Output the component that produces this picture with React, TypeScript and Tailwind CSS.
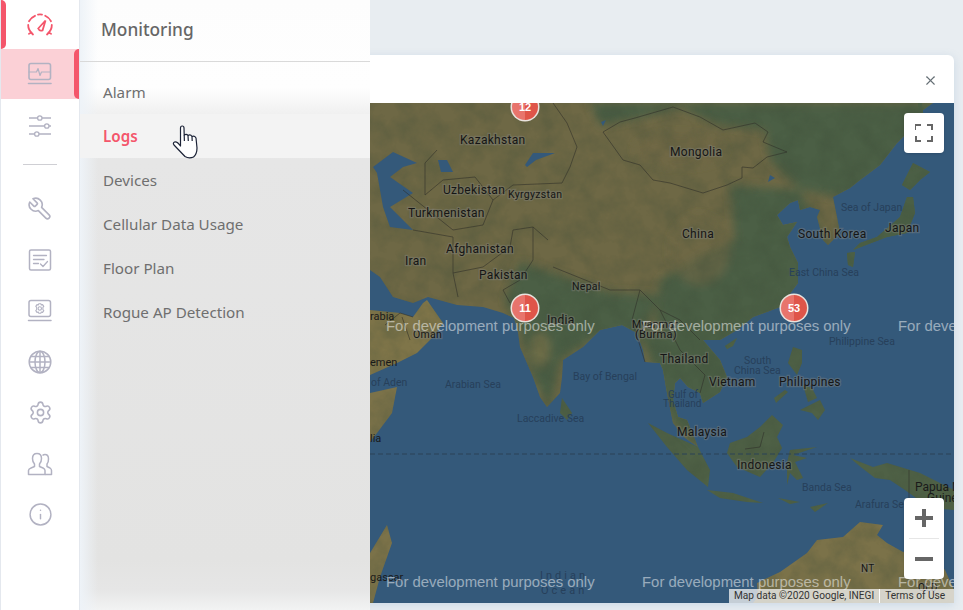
import { Info, Settings, X } from 'lucide-react';
import type { ReactNode } from 'react';

const menuItems = ['Alarm', 'Logs', 'Devices', 'Cellular Data Usage', 'Floor Plan', 'Rogue AP Detection'];

// map drawing, all points are in page pixels (viewBox starts at the map corner)
const asia =
  'M370 103 L933 103 L923 110 L910 130 L897 143 L880 165 L860 180 L850 188 L833 197 L837 217 L840 233 L828 245 L823 240 L817 217 L820 210 L810 207 L800 210 L798 200 L790 203 L777 215 L783 225 L797 222 L787 237 L790 247 L798 263 L798 283 L780 307 L753 317 L737 330 L720 340 L703 340 L720 360 L727 377 L720 392 L703 403 L700 393 L688 387 L680 378 L675 383 L673 400 L678 417 L687 420 L698 447 L685 438 L673 423 L667 393 L663 370 L660 363 L645 362 L643 350 L637 333 L622 325 L600 330 L583 347 L563 360 L562 377 L560 393 L547 407 L540 397 L533 377 L520 347 L518 332 L514 318 L503 313 L483 307 L457 305 L428 297 L413 303 L393 297 L380 277 L370 270 Z';
const arabia =
  'M370 310 L400 313 L413 317 L423 303 L427 300 L443 323 L433 337 L417 353 L397 363 L370 375 Z';
const islands = [
  'M370 393 L397 387 L392 413 L377 433 L370 442 Z',
  'M387 525 L392 543 L380 577 L373 603 L370 603 L370 553 Z',
  'M648 423 L667 433 L698 447 L710 470 L708 487 L687 470 L667 447 Z',
  'M707 490 L733 493 L763 503 L747 502 L720 498 Z',
  'M772 415 L783 425 L777 437 L782 448 L773 463 L760 477 L737 467 L727 453 L730 443 L747 437 L760 427 Z',
  'M817 447 L790 450 L787 463 L787 485 L790 473 L797 480 L803 478 L795 462 L807 458 L793 455 Z',
  'M850 458 L873 467 L887 463 L920 473 L954 490 L954 510 L930 508 L905 490 L890 480 L875 478 L862 468 Z',
  'M793 347 L802 350 L802 363 L797 375 L788 363 Z',
  'M800 410 L820 400 L825 410 L818 420 L812 413 Z',
  'M803 385 L812 388 L817 398 L808 402 Z',
  'M774 398 L785 390 L788 392 L776 403 Z',
  'M562 398 L572 413 L567 420 L560 413 Z',
  'M725 346 L737 338 L733 346 L727 349 Z',
  'M913 197 L915 213 L907 233 L887 237 L853 250 L860 243 L877 237 L900 217 L907 197 Z',
  'M847 253 L855 252 L853 267 L848 265 Z',
  'M913 163 L930 172 L920 180 L910 190 L902 185 Z',
  'M918 103 L922 103 L925 130 L922 140 L919 125 Z',
  'M778 498 L800 502 L790 504 Z',
  'M810 507 L828 503 L815 512 Z',
  'M860 522 L883 525 L877 535 L887 543 L903 552 L925 545 L945 570 L954 590 L954 603 L753 603 L758 597 L757 583 L780 572 L807 553 L817 540 L843 537 Z',
];
const greenAreas = [
  'M590 103 L940 103 L900 170 L855 200 L800 190 L770 160 L765 130 L720 125 L680 108 L640 118 L600 125 Z',
  'M730 185 L800 190 L830 250 L800 300 L740 340 L690 350 L655 325 L660 280 L700 255 L735 240 Z',
  'M520 262 L610 292 L660 295 L640 340 L640 360 L600 335 L560 360 L550 410 L530 370 L520 330 L505 300 Z',
  'M640 330 L730 340 L730 400 L700 450 L670 420 Z',
  'M840 190 L950 150 L950 270 L840 270 Z',
];
const borders = [
  'M620 122 L635 118 L673 107 L700 117 L723 130 L755 123 L768 132 L763 142 L787 152 L767 157 L753 168 L742 167 L742 178 L727 185 L703 193 L670 183 L653 180 L640 165 L623 160 L603 132 L620 122',
  'M553 103 L567 123 L577 147 L570 167 L562 183 L513 185 L493 200 L475 177 L443 180 L425 195 L425 163 L437 150',
  'M403 190 L453 230 L483 225 L493 200',
  'M413 230 L453 237 L453 273 L458 297',
  'M453 273 L483 267 L510 247 L513 230 L533 227 L548 240',
  'M533 227 L533 260 L520 280 L503 290 L510 303',
  'M553 267 L610 290 L640 290 L660 310 L680 320 L700 340',
  'M640 290 L632 320 L645 362 M660 310 L680 350 L705 375 L700 393',
  'M385 325 L400 313 L413 317 M402 317 L410 340',
  'M745 449 L760 447 L764 432',
  'M909 470 L909 500',
];
const countryLabels: [string, number, number, number][] = [
  ['Kazakhstan', 460, 144, 12],
  ['Mongolia', 670, 156, 12],
  ['Uzbekistan', 443, 194, 12],
  ['Kyrgyzstan', 508, 198, 10.5],
  ['Turkmenistan', 408, 217, 12],
  ['Afghanistan', 446, 253, 12],
  ['Iran', 405, 265, 12],
  ['Pakistan', 479, 279, 12],
  ['Nepal', 572, 290, 10.5],
  ['India', 547, 324, 12],
  ['China', 682, 238, 12],
  ['South Korea', 798, 238, 12],
  ['Japan', 885, 232, 12],
  ['Thailand', 660, 363, 12],
  ['Vietnam', 709, 386, 12],
  ['Philippines', 779, 386, 12],
  ['Malaysia', 677, 436, 12],
  ['Indonesia', 737, 469, 12],
  ['Oman', 413, 338, 10.5],
  ['Myanmar', 632, 328, 10.5],
  ['(Burma)', 635, 338, 11],
  ['NT', 861, 572, 10],
  ['QLD', 918, 591, 10],
];
const seaLabels: [string, number, number, number][] = [
  ['Sea of Japan', 841, 211, 10.5],
  ['East China Sea', 789, 276, 10.5],
  ['Philippine Sea', 829, 345, 10.5],
  ['South', 744, 364, 10.5],
  ['China Sea', 734, 374, 10.5],
  ['Gulf of', 668, 398, 10],
  ['Thailand', 663, 407, 10],
  ['Bay of Bengal', 573, 380, 10.5],
  ['Arabian Sea', 445, 388, 10.5],
  ['Laccadive Sea', 517, 422, 10.5],
  ['Banda Sea', 802, 491, 10.5],
  ['Arafura Sea', 855, 508, 10.5],
  ['of Aden', 371, 386, 10.5],
];

function Gauge() {
  return (
    <svg width="28" height="24" viewBox="0 0 28 24" fill="none" stroke="#f4566b" strokeWidth="1.8" strokeLinecap="round">
      <path d="M7 21.5 Q2 17 2.2 12" />
      <path d="M3 8.2 Q5 4.5 9 2.8" />
      <path d="M12 1.6 Q14 1.3 16 1.6" />
      <path d="M19.2 2.8 Q23 4.5 25 8.2" />
      <path d="M25.8 12 Q26 17 21 21.5" />
      <path d="M3 20.8 L5.5 19.5 M25 20.8 L22.5 19.5" />
      <path d="M12.2 15.5 L19.5 7.5 L16.6 17.3 Q13.5 18.5 12.2 15.5 Z" />
    </svg>
  );
}

function Pulse() {
  return (
    <svg width="26" height="24" viewBox="0 0 26 24" fill="none" stroke="#b2b2c2" strokeWidth="1.6" strokeLinecap="round" strokeLinejoin="round">
      <rect x="2" y="1.5" width="21.5" height="16" rx="2" />
      <path d="M2 10 H9.5 L11 6.5 L13 13.5 L14.5 10 H23.5" strokeWidth="1.2" />
      <path d="M1.5 21.5 H24" />
    </svg>
  );
}

function Sliders() {
  return (
    <svg width="24" height="24" viewBox="0 0 24 24" fill="none" stroke="#b2b2c2" strokeWidth="1.3">
      <path d="M1 5 H9.5 M14 5 H23 M1 13 H16.5 M21 13 H23 M1 21 H6.5 M11 21 H23" />
      <circle cx="11.8" cy="5" r="2.2" />
      <circle cx="18.8" cy="13" r="2.2" />
      <circle cx="8.8" cy="21" r="2.2" />
    </svg>
  );
}

function Wrench() {
  return (
    <svg width="26" height="26" viewBox="0 0 24 24" fill="none" stroke="#b2b2c2" strokeWidth="1.5" strokeLinecap="round" strokeLinejoin="round" className="-scale-x-100">
      <path d="M14.7 6.3a1 1 0 0 0 0 1.4l1.6 1.6a1 1 0 0 0 1.4 0l3.77-3.77a6 6 0 0 1-7.94 7.94l-6.91 6.91a2.12 2.12 0 0 1-3-3l6.91-6.91a6 6 0 0 1 7.94-7.94l-3.76 3.76z" />
    </svg>
  );
}

function CheckDoc() {
  return (
    <svg width="24" height="24" viewBox="0 0 24 24" fill="none" stroke="#b2b2c2" strokeWidth="1.5" strokeLinecap="round" strokeLinejoin="round">
      <rect x="1.5" y="2" width="21" height="20" rx="1.5" />
      <path d="M5.5 7.5 H18.5 M5.5 11.5 H16 M5.5 15.5 H10.5" strokeWidth="1.3" />
      <path d="M12.5 16 L15 18.5 L19.5 13.5" strokeWidth="1.3" />
    </svg>
  );
}

function LaptopGear() {
  return (
    <svg width="26" height="24" viewBox="0 0 26 24" fill="none" stroke="#b2b2c2" strokeWidth="1.5" strokeLinecap="round" strokeLinejoin="round">
      <rect x="2" y="1.5" width="21.5" height="16" rx="2" />
      <path d="M1.5 21.5 H24" />
      <circle cx="12.8" cy="9.5" r="1.7" strokeWidth="1.1" />
      <path
        d="M11.7 4.8 H13.9 L14.3 6 L15.6 5.6 L16.8 7.4 L15.9 8.4 L15.9 10.6 L16.8 11.6 L15.6 13.4 L14.3 13 L13.9 14.2 H11.7 L11.3 13 L10 13.4 L8.8 11.6 L9.7 10.6 L9.7 8.4 L8.8 7.4 L10 5.6 L11.3 6 Z"
        strokeWidth="1.1"
      />
    </svg>
  );
}

function Globe() {
  return (
    <svg width="24" height="24" viewBox="0 0 24 24" fill="none" stroke="#b2b2c2" strokeWidth="1.5">
      <circle cx="12" cy="12" r="10.8" />
      <ellipse cx="12" cy="12" rx="5" ry="10.8" />
      <path d="M12 1.2 V22.8 M1.2 12 H22.8 M2.8 6.5 H21.2 M2.8 17.5 H21.2" />
    </svg>
  );
}

function People() {
  return (
    <svg width="26" height="24" viewBox="0 0 26 24" fill="none" stroke="#b2b2c2" strokeWidth="1.5" strokeLinejoin="round">
      <path d="M1.5 22.5 V18.5 Q1.5 17 4 16 L7.5 14.5 V12 Q5.5 10 5.5 6.5 Q5.5 1.5 10 1.5 Q14.5 1.5 14.5 6.5 Q14.5 10 12.5 12 V14.5 L16 16 Q18 17 18 18.5 V22.5 Z" />
      <path d="M15.5 3.5 Q16.5 2.5 18 2.5 Q21.5 2.5 21.5 7 Q21.5 10.5 20 12 V14.5 L23 16 Q24.5 17 24.5 18.5 V22.5 H18" />
    </svg>
  );
}

function NavIcon({ children }: { children: ReactNode }) {
  return <div className="flex h-[51px] items-center justify-center">{children}</div>;
}

function HandCursor() {
  return (
    <svg width="28" height="36" viewBox="171 124 28 36" className="absolute left-[91px] top-[124px]" fill="#fff" stroke="#1b2236" strokeWidth="1.2" strokeLinejoin="round">
      <path d="M180.5 146 L180.5 128 Q180.5 126 182.2 126 Q184 126 184 128 L184.2 135 Q186.5 133.5 188 135.5 Q190.5 134 192 136.5 Q194.5 135.5 196 138 L197 148 Q197 154 193.5 157 Q189 159 185 156.5 L174 145 Q172.5 143 174.5 142 Q177 141 180.5 146 Z" />
      <path d="M184.2 135 L184.4 141 M188 135.5 L188.3 141 M192 136.5 L192.2 141" fill="none" />
    </svg>
  );
}

function MapArt() {
  const pin = (x: number, y: number, label: string) => (
    <g key={label}>
      <circle cx={x} cy={y} r="14.5" fill="#e9e3de" />
      <path d={`M${x} ${y - 13} A13 13 0 0 0 ${x} ${y + 13} Z`} fill="#e8746c" />
      <path d={`M${x} ${y - 13} A13 13 0 0 1 ${x} ${y + 13} Z`} fill="#df5549" />
      <text x={x} y={y + 4} textAnchor="middle" fontSize="11" fontWeight="700" fill="#fff" fontFamily="Liberation Sans, sans-serif">
        {label}
      </text>
    </g>
  );
  return (
    <svg width="584" height="500" viewBox="370 103 584 500" className="block">
      <defs>
        <clipPath id="mainland">
          <path d={asia} />
          <path d={arabia} />
          {islands.map((d) => (
            <path key={d} d={d} />
          ))}
        </clipPath>
        <filter id="soft" x="-10%" y="-10%" width="120%" height="120%">
          <feGaussianBlur stdDeviation="4" />
        </filter>
        <filter id="terrain" x="0" y="0" width="100%" height="100%" colorInterpolationFilters="sRGB">
          <feTurbulence type="fractalNoise" baseFrequency="0.05" numOctaves="4" seed="7" />
          <feColorMatrix values="0 0 0 0 0.24  0 0 0 0 0.3  0 0 0 0 0.22  2 0 0 0 -0.7" />
        </filter>
      </defs>
      <rect x="370" y="103" width="584" height="500" fill="#34597a" />
      <path d={asia} fill="#6e6845" />
      <path d={arabia} fill="#7f7549" />
      {islands.map((d, i) => (
        <path key={d} d={d} fill={i < 2 || i === 19 ? '#7b7249' : '#4f6146'} />
      ))}
      <g clipPath="url(#mainland)">
        <g filter="url(#soft)">
          {greenAreas.map((d) => (
            <path key={d} d={d} fill="#4c5f45" />
          ))}
          <ellipse cx="700" cy="250" rx="30" ry="35" fill="#6e6845" opacity="0.6" />
          <ellipse cx="540" cy="350" rx="10" ry="18" fill="#7b7249" opacity="0.7" />
          <ellipse cx="680" cy="150" rx="45" ry="16" fill="#6f6845" />
        </g>
        <rect x="370" y="103" width="584" height="500" filter="url(#terrain)" opacity="0.28" />
      </g>
      {/* inland water */}
      <path d="M393 152 L417 163 L403 167 L390 177 L413 193 L390 207 L413 230 L390 227 L383 207 L377 173 L373 167 Z" fill="#34597a" />
      <path d="M525 165 L533 153 L555 153 L536 160 L527 167 Z" fill="#34597a" />
      <path d="M438 160 L447 160 L453 172 L441 172 Z" fill="#34597a" />
      <path d="M601 122 L606 120 L603 126 Z" fill="#34597a" />
      <path d="M770 175 L775 178 L768 182 Z" fill="#34597a" />
      <g fill="none" stroke="#2e2e28" strokeWidth="0.7" opacity="0.8">
        {borders.map((d) => (
          <path key={d} d={d} />
        ))}
      </g>
      <path d="M370 454 H954" stroke="#2a4257" strokeWidth="1" strokeDasharray="5 3" />
      {seaLabels.map(([t, x, y, s]) => (
        <text key={t + x} x={x} y={y} fontSize={s} fill="#27405a" fontFamily="Roboto, sans-serif">
          {t}
        </text>
      ))}
      {countryLabels.map(([t, x, y, s]) => (
        <text key={t} x={x} y={y} fontSize={s} fill="#161616" stroke="#85858066" strokeWidth="2.5" paintOrder="stroke" fontFamily="Roboto, sans-serif" letterSpacing="0.3">
          {t}
        </text>
      ))}
      <text x="370" y="320" fontSize="11" fill="#1a1a1a" fontFamily="Roboto, sans-serif">rabia</text>
      <text x="370" y="366" fontSize="11" fill="#1a1a1a" fontFamily="Roboto, sans-serif">emen</text>
      <text x="370" y="442" fontSize="11" fill="#1a1a1a" fontFamily="Roboto, sans-serif">lia</text>
      <text x="370" y="581" fontSize="11" fill="#1a1a1a" fontFamily="Roboto, sans-serif">gascar</text>
      <text x="540" y="579" fontSize="11" fill="#27405a" letterSpacing="3" fontFamily="Roboto, sans-serif">Indian</text>
      <text x="541" y="594" fontSize="11" fill="#27405a" letterSpacing="3" fontFamily="Roboto, sans-serif">Ocean</text>
      <text x="915" y="491" fontSize="12" fill="#1a1a1a" fontFamily="Roboto, sans-serif">Papua New</text>
      <text x="927" y="502" fontSize="12" fill="#1a1a1a" fontFamily="Roboto, sans-serif">Guinea</text>
      {pin(525, 107, '12')}
      {pin(525, 308, '11')}
      {pin(794, 308, '53')}
      {[331, 587].map((y) =>
        [386, 642, 898].map((x) => (
          <text key={`${x}-${y}`} x={x} y={y} fontSize="14.9" fill="#ffffff" fillOpacity="0.5" fontFamily="Liberation Sans, sans-serif">
            For development purposes only
          </text>
        )),
      )}
    </svg>
  );
}

export default function App() {
  return (
    <div className="relative flex h-[610px] w-[963px] overflow-hidden bg-[#e8edf1] font-['Noto_Sans',sans-serif]">
      <aside className="z-20 flex w-[80px] shrink-0 flex-col border-x border-[#e4e8ee] bg-white">
        <div className="relative flex h-[49px] items-center justify-center">
          <span className="absolute bottom-0 left-0 top-0 w-[5px] rounded-r-md bg-[#f4566b]" />
          <Gauge />
        </div>
        <div className="relative flex h-[50px] items-center justify-center bg-[#fbd0d6]">
          <span className="absolute bottom-0 right-0 top-0 w-[5px] rounded-l-md bg-[#f4566b]" />
          <Pulse />
        </div>
        <NavIcon>
          <Sliders />
        </NavIcon>
        <div className="h-[33px] px-[22px] pt-[14px]">
          <div className="h-px bg-[#cfcfd4]" />
        </div>
        <NavIcon>
          <Wrench />
        </NavIcon>
        <NavIcon>
          <CheckDoc />
        </NavIcon>
        <NavIcon>
          <LaptopGear />
        </NavIcon>
        <NavIcon>
          <Globe />
        </NavIcon>
        <NavIcon>
          <Settings size={25} strokeWidth={1.5} color="#b2b2c2" />
        </NavIcon>
        <NavIcon>
          <People />
        </NavIcon>
        <NavIcon>
          <Info size={25} strokeWidth={1.4} color="#b2b2c2" />
        </NavIcon>
      </aside>

      <main className="flex-1 pb-[7px] pl-[20px] pr-[9px] pt-[55px]">
        <div className="flex h-full flex-col overflow-hidden rounded-t-md bg-white shadow-[0_2px_8px_rgba(120,160,200,0.25)]">
          <div className="flex h-[48px] shrink-0 items-center justify-end pr-[16px] pt-[3px]">
            <X size={15} strokeWidth={1.8} color="#666f75" />
          </div>
          <div className="relative flex flex-1 justify-end bg-[#34597a]">
            <MapArt />
            <button className="absolute right-[10px] top-[10px] flex h-10 w-10 items-center justify-center rounded-sm bg-white shadow">
              <svg width="18" height="18" viewBox="0 0 18 18" fill="none" stroke="#666" strokeWidth="2">
                <path d="M0 6 V1 H6 M12 1 H18 M17 0 V6 M1 12 V17 H6 M12 17 H17 V12" />
              </svg>
            </button>
            <div className="absolute bottom-[24px] right-[10px] flex h-[81px] w-10 flex-col items-center rounded-sm bg-white shadow">
              <div className="flex h-10 items-center justify-center">
                <svg width="18" height="18" viewBox="0 0 18 18" fill="#666">
                  <path d="M7 0 H11 V7 H18 V11 H11 V18 H7 V11 H0 V7 H7 Z" />
                </svg>
              </div>
              <div className="h-px w-[30px] bg-[#e6e6e6]" />
              <div className="flex h-10 items-center justify-center">
                <div className="h-[4px] w-[18px] bg-[#666]" />
              </div>
            </div>
            <div className="absolute bottom-0 right-0 flex h-[14px] w-[225px] items-center bg-[#f5f5f5]/75 pl-[5px] font-['Roboto',sans-serif] text-[10.15px] text-[#333]">
              <span>Map data ©2020 Google, INEGI</span>
              <span className="mx-[5px] h-full w-px bg-white" />
              <span>Terms of Use</span>
            </div>
          </div>
        </div>
      </main>

      <div className="absolute bottom-0 left-[80px] top-0 z-10 w-[290px] bg-[linear-gradient(to_bottom,#fdfdfd_0,#fefefe_88px,#f0f0f0_114px,#e6e6e6_160px,#e3e3e2_560px,#e6e6e6_590px,#f2f3f3_610px)]">
        <div className="absolute bottom-0 left-0 top-0 w-[18px] bg-gradient-to-r from-[#eef3f8] to-transparent" />
        <div className="relative">
          <div className="flex h-[62px] items-center border-b border-[#d9d9d9] pb-[2px] pl-[21px] text-[17.3px] font-medium text-[#666]">
            Monitoring
          </div>
          <ul className="pt-[8px]">
            {menuItems.map((item) => (
              <li
                key={item}
                className={
                  item === 'Logs'
                    ? 'flex h-[44px] items-center bg-[#f3f3f3] pl-[23px] pt-[1px] text-[15.2px] font-semibold text-[#f4566b]'
                    : 'flex h-[44px] items-center pl-[23px] pt-[1px] text-[15.2px] text-[#6f6f6f]'
                }
              >
                {item}
              </li>
            ))}
          </ul>
          <HandCursor />
        </div>
      </div>
    </div>
  );
}
